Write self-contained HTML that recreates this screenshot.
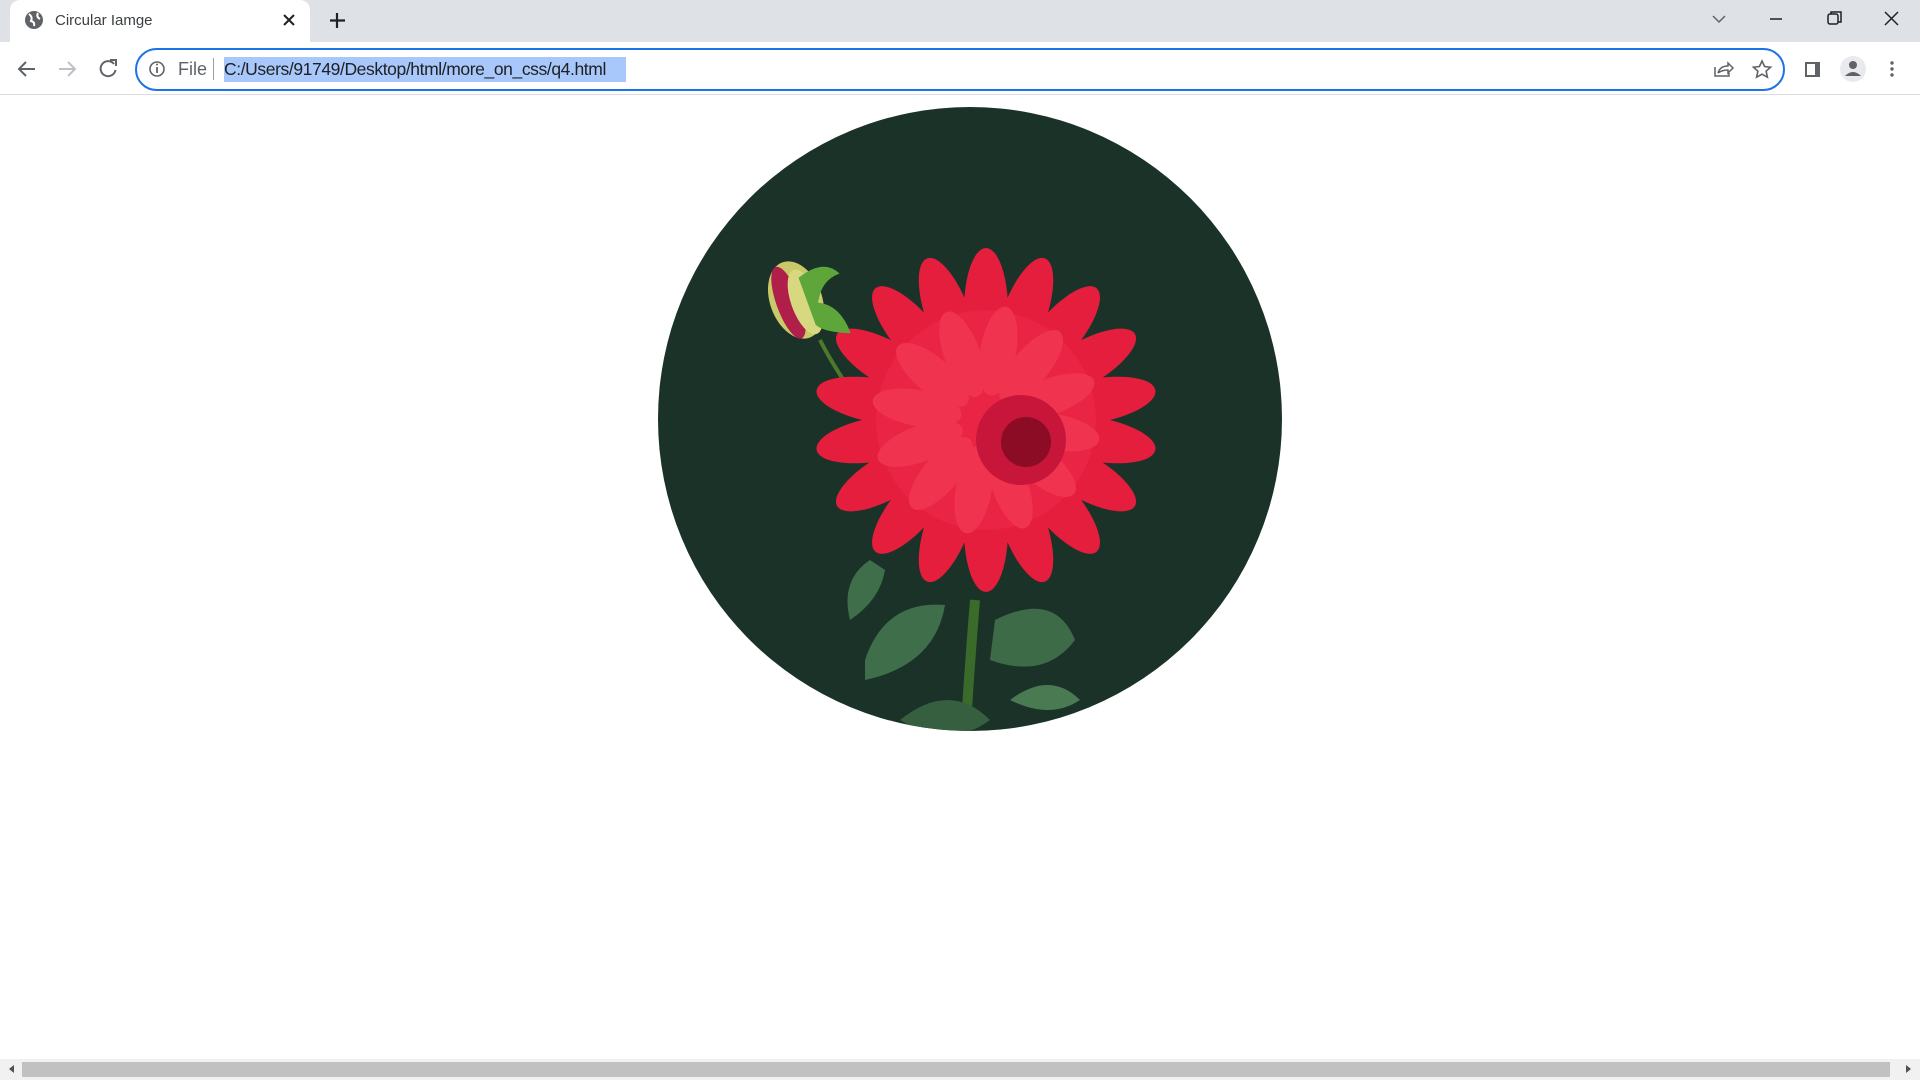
<!DOCTYPE html>
<html><head><meta charset="utf-8"><style>
*{margin:0;padding:0;box-sizing:border-box}
body{width:1920px;height:1080px;overflow:hidden;background:#fff;font-family:"Liberation Sans",Arial,sans-serif;position:relative}
.strip{position:absolute;left:0;top:0;width:1920px;height:42px;background:#dee1e6}
.tab{position:absolute;left:10px;top:0;width:300px;height:42px;background:#fff;border-radius:10px 10px 0 0}
.tab .t{position:absolute;left:45px;top:12px;font-size:15px;color:#3c4043}
.tool{position:absolute;left:0;top:42px;width:1920px;height:53px;background:#fff;border-bottom:1px solid #dadce0}
.addr{position:absolute;left:135px;top:48px;width:1650px;height:43px;border:2px solid #1a73e8;border-radius:22px;background:#fff}
.file{position:absolute;left:178px;top:59px;font-size:18px;color:#5f6368}
.sep{position:absolute;left:213px;top:58px;width:1px;height:22px;background:#9aa0a6}
.url{position:absolute;left:224px;top:57px;height:25px;width:402px;background:#a8c7fa;font-size:17.5px;letter-spacing:-0.4px;line-height:25px;color:#202124;white-space:nowrap}
.sb{position:absolute;left:0;top:1059px;width:1920px;height:21px;background:#f1f1f1}
.sb .th{position:absolute;left:22px;top:3px;width:1868px;height:15px;background:#c1c1c1}
svg{position:absolute;left:0;top:0}
</style></head><body>
<div class="strip"></div>
<div class="tab"><div class="t">Circular Iamge</div></div>
<div class="tool"></div>
<div class="addr"></div>
<div class="file">File</div><div class="sep"></div>
<div class="url">C:/Users/91749/Desktop/html/more_on_css/q4.html</div>
<div class="sb"><div class="th"></div></div>
<svg width="1920" height="1080" viewBox="0 0 1920 1080">
<circle cx="34" cy="20" r="9" fill="#5f6368"/>
<path d="M29 14 q4 3 2 7 q4 1 3 5 M38 13 q-2 4 2 6" stroke="#fff" stroke-width="2" fill="none"/>
<path d="M284 15 l10 10 M294 15 l-10 10" stroke="#202124" stroke-width="2"/>
<path d="M337 13 v15 M330 20.5 h15" stroke="#202124" stroke-width="2.2"/>
<path d="M1713 16 l6 6 l6 -6" stroke="#5f6368" stroke-width="1.5" fill="none"/>
<path d="M1770 19 h12" stroke="#202124" stroke-width="1.5"/>
<rect x="1828" y="14" width="10" height="10" rx="2" stroke="#202124" stroke-width="1.5" fill="none"/>
<path d="M1831 14 v-2 h10 v10 h-3" stroke="#202124" stroke-width="1.5" fill="none"/>
<path d="M1885 12 l13 13 M1898 12 l-13 13" stroke="#202124" stroke-width="1.5"/>
<path d="M35 69 h-16 M26 62 l-7 7 l7 7" stroke="#5f6368" stroke-width="2" fill="none"/>
<path d="M59 69 h16 M68 62 l7 7 l-7 7" stroke="#bdc1c6" stroke-width="2" fill="none"/>
<path d="M114 64 a7.5 7.5 0 1 0 1.5 6" stroke="#5f6368" stroke-width="2" fill="none"/>
<path d="M110 60 h6 v6" stroke="#5f6368" stroke-width="2" fill="none"/>
<circle cx="157" cy="69" r="7" stroke="#5f6368" stroke-width="1.6" fill="none"/>
<path d="M157 67 v6" stroke="#5f6368" stroke-width="1.8"/><circle cx="157" cy="64.5" r="1" fill="#5f6368"/>
<path d="M1715 67 v9 h14 v-3 M1718 73 q2 -7 10 -7 v-3 l5 5 l-5 5 v-3 q-6 0 -10 3" stroke="#5f6368" stroke-width="1.5" fill="none"/>
<path d="M1762 61 l2.6 5.5 6 .7 -4.5 4 1.3 6 -5.4 -3 -5.4 3 1.3 -6 -4.5 -4 6 -.7z" stroke="#5f6368" stroke-width="1.6" fill="none"/>
<rect x="1805" y="62" width="15" height="15" fill="#5f6368"/><rect x="1807" y="64" width="8" height="11" fill="#fff"/>
<circle cx="1853" cy="69" r="13" fill="#e8eaed"/>
<circle cx="1853" cy="65" r="4" fill="#5f6368"/><path d="M1845 76 q8 -8 16 0z" fill="#5f6368"/>
<circle cx="1892" cy="63" r="1.7" fill="#5f6368"/><circle cx="1892" cy="69" r="1.7" fill="#5f6368"/><circle cx="1892" cy="75" r="1.7" fill="#5f6368"/>
<path d="M9 1069 l5 -4 v8z M1911 1069 l-5 -4 v8z" fill="#505050"/>
<defs><clipPath id="c"><circle cx="970" cy="419" r="312"/></clipPath></defs>
<circle cx="970" cy="419" r="312" fill="#1b3229"/>
<g clip-path="url(#c)">
<path d="M975 600 q-5 60 -10 140" stroke="#3a6b2a" stroke-width="10" fill="none"/>
<path d="M865 660 q20 -60 80 -55 q-10 60 -80 75z" fill="#3f6e4a"/>
<path d="M995 620 q60 -30 80 20 q-30 40 -85 20z" fill="#3d6b48"/>
<path d="M900 720 q50 -40 90 0 q-40 30 -90 0z" fill="#355f3e"/>
<path d="M1010 700 q40 -30 70 0 q-30 20 -70 0z" fill="#4a7a52"/>
<path d="M870 560 q-30 20 -20 60 q30 -20 35 -50z" fill="#3f6e4a"/>
<path d="M820 340 q10 20 30 50" stroke="#4d7a2a" stroke-width="4" fill="none"/>
<g transform="translate(986,420)">
<g fill="#e41e3c">
<ellipse rx="22" ry="62" transform="rotate(0) translate(0,-110)"/>
<ellipse rx="22" ry="62" transform="rotate(20) translate(0,-110)"/>
<ellipse rx="22" ry="62" transform="rotate(40) translate(0,-110)"/>
<ellipse rx="22" ry="62" transform="rotate(60) translate(0,-110)"/>
<ellipse rx="22" ry="62" transform="rotate(80) translate(0,-110)"/>
<ellipse rx="22" ry="62" transform="rotate(100) translate(0,-110)"/>
<ellipse rx="22" ry="62" transform="rotate(120) translate(0,-110)"/>
<ellipse rx="22" ry="62" transform="rotate(140) translate(0,-110)"/>
<ellipse rx="22" ry="62" transform="rotate(160) translate(0,-110)"/>
<ellipse rx="22" ry="62" transform="rotate(180) translate(0,-110)"/>
<ellipse rx="22" ry="62" transform="rotate(200) translate(0,-110)"/>
<ellipse rx="22" ry="62" transform="rotate(220) translate(0,-110)"/>
<ellipse rx="22" ry="62" transform="rotate(240) translate(0,-110)"/>
<ellipse rx="22" ry="62" transform="rotate(260) translate(0,-110)"/>
<ellipse rx="22" ry="62" transform="rotate(280) translate(0,-110)"/>
<ellipse rx="22" ry="62" transform="rotate(300) translate(0,-110)"/>
<ellipse rx="22" ry="62" transform="rotate(320) translate(0,-110)"/>
<ellipse rx="22" ry="62" transform="rotate(340) translate(0,-110)"/>
</g>
<circle r="110" fill="#ea2444"/>
<g fill="#f0334f">
<ellipse rx="18" ry="45" transform="rotate(10) translate(0,-70)"/>
<ellipse rx="18" ry="45" transform="rotate(40) translate(0,-70)"/>
<ellipse rx="18" ry="45" transform="rotate(70) translate(0,-70)"/>
<ellipse rx="18" ry="45" transform="rotate(100) translate(0,-70)"/>
<ellipse rx="18" ry="45" transform="rotate(130) translate(0,-70)"/>
<ellipse rx="18" ry="45" transform="rotate(160) translate(0,-70)"/>
<ellipse rx="18" ry="45" transform="rotate(190) translate(0,-70)"/>
<ellipse rx="18" ry="45" transform="rotate(220) translate(0,-70)"/>
<ellipse rx="18" ry="45" transform="rotate(250) translate(0,-70)"/>
<ellipse rx="18" ry="45" transform="rotate(280) translate(0,-70)"/>
<ellipse rx="18" ry="45" transform="rotate(310) translate(0,-70)"/>
<ellipse rx="18" ry="45" transform="rotate(340) translate(0,-70)"/>
</g>
<circle cx="35" cy="20" r="45" fill="#c8163a"/>
<circle cx="40" cy="22" r="25" fill="#8c0c26"/>
</g>
<g transform="translate(796,300) rotate(-20)">
<ellipse rx="26" ry="40" fill="#c9c96a"/>
<ellipse cx="-8" rx="12" ry="38" fill="#b01e4a"/>
<ellipse cx="8" cy="5" rx="14" ry="34" fill="#d8d880"/>
<path d="M10 -20 q30 -10 40 10 q-20 0 -30 20 q20 10 20 40 q-25 -10 -30 -20z" fill="#5ea53a"/>
</g>
</g>
</svg>
</body></html>
